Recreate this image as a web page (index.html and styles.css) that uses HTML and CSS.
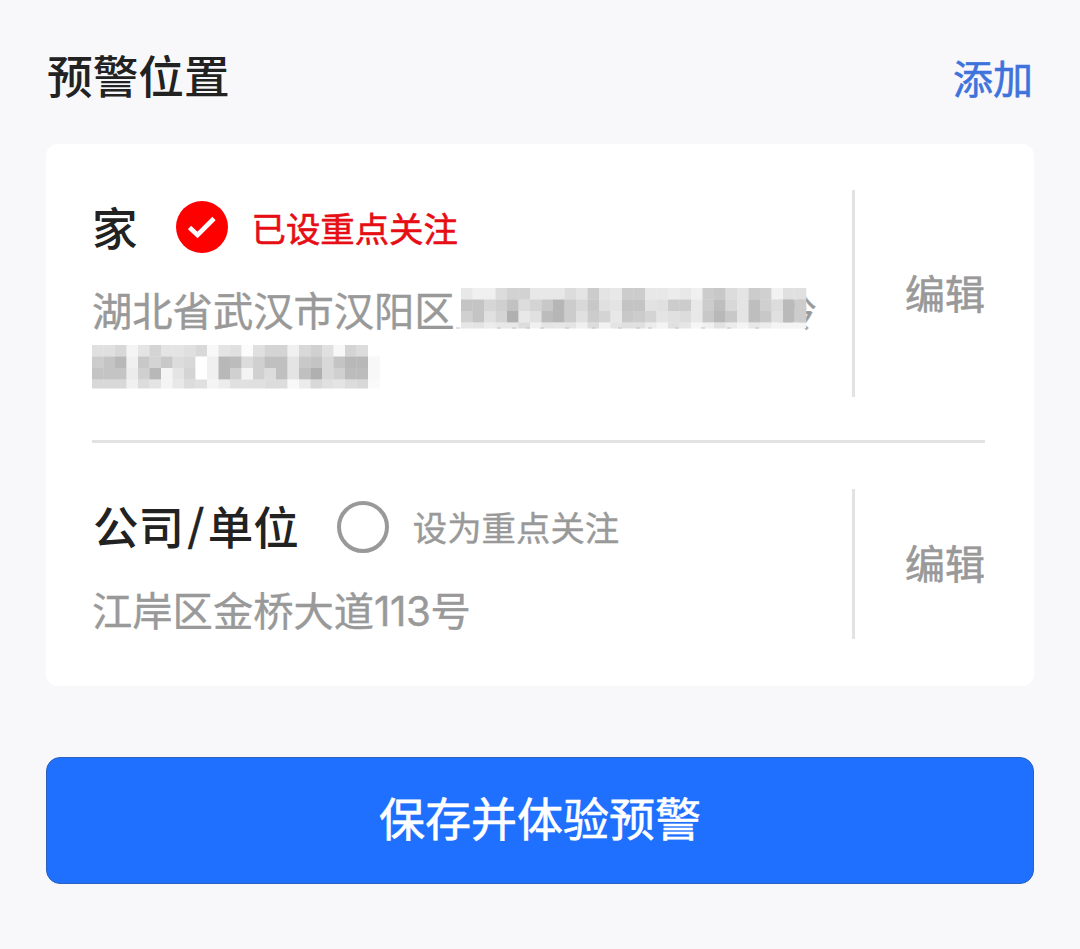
FILE: index.html
```html
<!DOCTYPE html>
<html lang="zh-CN">
<head>
  <meta charset="UTF-8">
  <meta name="viewport" content="width=device-width, initial-scale=1.0">
  <title>预警位置</title>
  <link rel="stylesheet" href="styles.css">
</head>
<body>
  <div class="container">
    <div class="topbar">
      <h2 class="title">预警位置</h2>
      <a class="add-btn">添加</a>
    </div>

    <div class="card">
      <div class="location home">
        <div class="info">
          <div class="name-row">
            <span class="name">家</span>
            <svg class="check" viewBox="0 0 52 52">
              <circle cx="26" cy="26" r="26" fill="#fe0000"/>
              <path d="M13.5 26.5 L21.5 34 L38 17.5" fill="none" stroke="#fff" stroke-width="4.6"/>
            </svg>
            <span class="focus active">已设重点关注</span>
          </div>
          <div class="address">湖北省武汉市汉阳区<span class="masked">岭<svg class="mosaic" id="maskLine1" width="351" height="42"></svg></span><br><svg class="mosaic-line" id="maskLine2" width="290" height="44"></svg></div>
        </div>
        <a class="edit-btn">编辑</a>
      </div>

      <div class="location office">
        <div class="info">
          <div class="name-row">
            <span class="name">公司<span class="slash">/</span>单位</span>
            <span class="circle"></span>
            <span class="focus">设为重点关注</span>
          </div>
          <div class="address">江岸区金桥大道<span class="num">113</span>号</div>
        </div>
        <a class="edit-btn">编辑</a>
      </div>
    </div>

    <button class="save-btn">保存并体验预警</button>
  </div>

  <script src="mosaic.js"></script>
</body>
</html>
```
FILE: styles.css
```css
* {
  box-sizing: border-box;
}

body {
  margin: 0;
  font-family: "Noto Sans CJK SC", sans-serif;
  background-color: #f8f8fb;
  color: #222222;
}

.container {
  height: 949px;
  padding: 12px 46px 0;
}

.topbar {
  display: flex;
  justify-content: space-between;
  align-items: center;
  height: 132px;
}

.title {
  margin: 0;
  padding: 0 0 8px 1px;
  font-size: 45.7px;
  font-weight: 500;
  line-height: 60px;
}

.add-btn {
  padding: 0 1px 3px 0;
  font-size: 40px;
  line-height: 60px;
  color: #3f73dc;
  -webkit-text-stroke: 0.6px #3f73dc;
}

.card {
  height: 542px;
  padding: 46px 49px 0 46px;
  background-color: #ffffff;
  border-radius: 12px;
}

.location {
  display: flex;
}

.home {
  height: 253px;
  padding-bottom: 43px;
  border-bottom: 3px solid #e2e2e2;
}

.office {
  height: 196px;
  padding-top: 46px;
}

.info {
  width: 763px;
  border-right: 3px solid #e2e2e2;
}

.name-row {
  display: flex;
  align-items: center;
  height: 74px;
}

.name {
  padding: 0 0 2px 1px;
  font-size: 45.5px;
  font-weight: 500;
  line-height: 60px;
}

.home .name {
  padding-left: 0;
}

.slash {
  padding: 0 3.5px;
  font-size: 43px;
  line-height: 1;
  vertical-align: 4px;
  -webkit-text-stroke: 0.5px #222222;
}

.check,
.circle {
  width: 52px;
  height: 52px;
  margin: 0 24px 0 38px;
}

.circle {
  margin-top: 1px;
  border: 4px solid #999999;
  border-radius: 50%;
}

.focus {
  font-size: 34.4px;
  line-height: 50px;
  color: #999999;
  -webkit-text-stroke: 0.4px #999999;
}

.focus.active {
  color: #e60d14;
  -webkit-text-stroke: 0.6px #e60d14;
}

.address {
  padding-top: 16px;
  font-size: 40.3px;
  line-height: 57px;
  color: #999999;
  white-space: nowrap;
  -webkit-text-stroke: 0.4px #999999;
}

.office .address {
  padding-top: 17px;
}

.masked {
  position: relative;
  padding-left: 322px;
}

.mosaic {
  position: absolute;
  left: 1px;
  top: 9px;
}

.mosaic-line {
  display: block;
  margin-top: 8px;
}

.num {
  font-family: Inter, sans-serif;
  letter-spacing: -0.4px;
}

.edit-btn {
  flex: 1;
  align-self: center;
  padding-bottom: 4px;
  text-align: right;
  font-size: 40px;
  line-height: 60px;
  color: #999999;
  -webkit-text-stroke: 0.6px #999999;
}

.save-btn {
  display: block;
  width: 100%;
  height: 127px;
  margin-top: 71px;
  padding: 0 0 10px;
  border: 1px solid #2c62bd;
  border-radius: 14px;
  background-color: #1f70ff;
  color: #ffffff;
  font-family: inherit;
  font-size: 46px;
  line-height: 60px;
  -webkit-text-stroke: 0.6px #ffffff;
}
```
FILE: mosaic.js
```js
// grey levels of the mosaic that hides the street address
const topLine = [
  "e8 f0 f0 dc d2 d2 e8 e8 e8 dc e4 cc e4 e8 cc cc e8 e8 ec e8 f0 cc c8 dc e4 cc d0 f2 e0 e0",
  "c4 c4 d6 d0 c2 dc d4 c8 b6 cc d8 c8 e0 e4 c4 c4 e2 e0 cc cc e8 cc be d8 e4 be d0 dc ba cc",
  "d0 c4 e0 d4 b0 e8 e0 bc b6 cc e0 cc d4 e8 c8 cc d4 e4 e0 dc e8 c8 b8 c8 e4 be c8 e0 ba cc",
  "e6 e4 ec e8 e8 dc f0 e4 e6 e4 f0 dc f2 e4 e0 e0 ec f4 e0 e6 f6 f0 e2 ec f4 e8 ec f4 f4 f4"
];
const bottomLine = [
  "e0 e0 d8 f4 e4 d4 e4 e4 e0 d8 f8 e4 e0 fc e0 d4 d4 f0 d8 d0 e0 f8 d4 dc ff",
  "cc c4 b8 f0 c8 d4 c8 dc d8 ff f0 b8 bc dc d0 c0 c0 e4 c8 c4 d8 c4 b8 b8 f8",
  "c4 c4 c4 ec d0 b8 f4 e4 d4 ff f0 b8 d0 f4 d0 dc c0 e4 c0 b0 d8 d0 bc bc f8",
  "d8 d8 d8 f0 dc e4 f4 e8 dc e0 f4 ec e0 e0 e0 dc dc f8 ec d8 e0 e4 dc d8 fa"
];
// strokes that stick out under the first line
const strokes = [0, 41, 56, 70, 84, 109, 136, 162, 180, 192, 219, 245, 271, 299];
const size = 11.5;

function addRect(svg, x, y, width, height, fill) {
  const rect = document.createElementNS("http://www.w3.org/2000/svg", "rect");
  rect.setAttribute("x", x);
  rect.setAttribute("y", y);
  rect.setAttribute("width", width);
  rect.setAttribute("height", height);
  rect.setAttribute("fill", fill);
  svg.appendChild(rect);
}

function drawMosaic(id, rows, startX, lastHeight) {
  const svg = document.getElementById(id);
  rows.forEach((row, y) => {
    row.split(" ").forEach((grey, x) => {
      const height = y === 3 ? lastHeight : size + 0.3;
      addRect(svg, startX + x * size, y * size, size + 0.3, height, "#" + grey + grey + grey);
    });
  });
}

drawMosaic("maskLine1", topLine, 5, 6);
drawMosaic("maskLine2", bottomLine, 0, 9);

strokes.forEach(x => {
  addRect(document.getElementById("maskLine1"), x, 39.5, 4, 1, "#c4c4c4");
});
```
